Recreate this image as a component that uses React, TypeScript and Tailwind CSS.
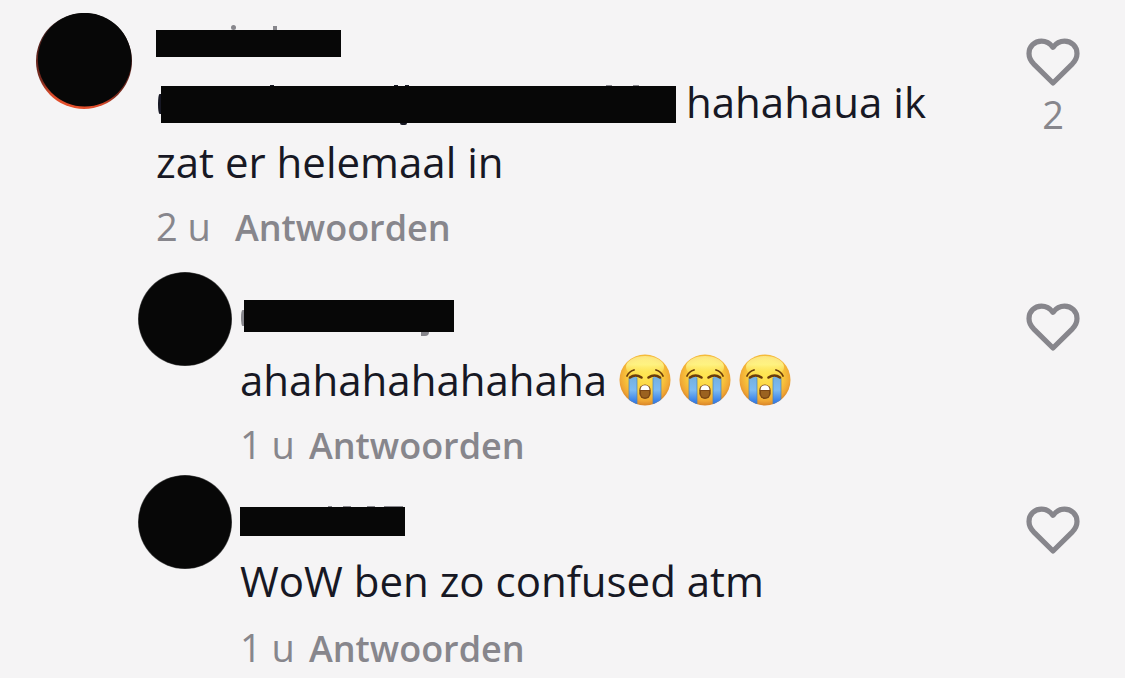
import { useId } from "react";
import type { ReactNode } from "react";

function Heart() {
  return (
    <svg viewBox="0 0 54 50" className="h-[50px] w-[54px]" fill="none" aria-hidden="true">
      <path
        d="M27 46 L7.6 26.800 C4.200 23.200 3 19.800 3 16.500 C3 9.400 8.500 4.200 15.500 4.200 C20.300 4.200 23.800 6.200 27 10.300 C30.200 6.200 33.700 4.200 38.500 4.200 C45.500 4.200 51 9.400 51 16.500 C51 19.800 49.800 23.200 46.400 26.800 Z"
        stroke="#87868c"
        strokeWidth="5.200"
        strokeLinejoin="round"
      />
    </svg>
  );
}

function CryingFace() {
  const id = useId();
  const face = `${id}-face`;
  const glow = `${id}-glow`;
  const tear = `${id}-tear`;
  const clip = `${id}-clip`;
  return (
    <svg viewBox="0 0 52 52" className="size-[52px]" role="img" aria-label="Loudly crying face">
      <defs>
        <radialGradient id={face} cx="0.5" cy="0.42" r="0.58">
          <stop offset="0" stopColor="#ffe552" />
          <stop offset="0.55" stopColor="#fbcf3e" />
          <stop offset="0.85" stopColor="#efa634" />
          <stop offset="1" stopColor="#d98428" />
        </radialGradient>
        <linearGradient id={glow} x1="0" y1="0" x2="0" y2="1">
          <stop offset="0" stopColor="#fffcae" stopOpacity="0.6" />
          <stop offset="0.4" stopColor="#fffa90" stopOpacity="0.8" />
          <stop offset="1" stopColor="#ffec50" stopOpacity="0" />
        </linearGradient>
        <linearGradient id={tear} x1="0" y1="0" x2="0" y2="1">
          <stop offset="0" stopColor="#74afe0" />
          <stop offset="0.45" stopColor="#7dbbf2" />
          <stop offset="0.8" stopColor="#3f85e8" />
          <stop offset="1" stopColor="#2f70d8" />
        </linearGradient>
        <clipPath id={clip}>
          <circle cx="26" cy="26" r="25.500" />
        </clipPath>
      </defs>
      <circle cx="26" cy="26" r="25.500" fill={`url(#${face})`} />
      <ellipse cx="26" cy="13" rx="19" ry="11" fill={`url(#${glow})`} />
      <g clipPath={`url(#${clip})`}>
        <rect x="10" y="23" width="8" height="29" fill={`url(#${tear})`} />
        <rect x="34" y="23" width="8" height="29" fill={`url(#${tear})`} />
        <path d="M10 24v28M18 24v28M34 24v28M42 24v28" stroke="#4b84b4" strokeWidth="0.700" />
      </g>
      <g fill="none" stroke="#6a3c0c" strokeLinecap="round">
        <path d="M8 22 Q10 17.500 15 16" strokeWidth="1.800" />
        <path d="M44 22 Q42 17.500 37 16" strokeWidth="1.800" />
        <path d="M11 23.500 Q16.500 19.500 22.500 23.500" strokeWidth="2.600" />
        <path d="M29.500 23.500 Q35.500 19.500 41 23.500" strokeWidth="2.600" />
      </g>
      <rect x="20.300" y="30.500" width="11.400" height="14.500" rx="5.700" fill="#7b4614" />
      <path d="M21.500 36 Q21.500 31.300 26 31.300 Q30.500 31.300 30.500 36Z" fill="#fff" />
      <path d="M22 37 H30 V39.500 Q30 43.500 26 43.500 Q22 43.500 22 39.500Z" fill="#9b6220" />
    </svg>
  );
}

function Avatar({ ring = false }: { ring?: boolean }) {
  const id = useId();
  return (
    <svg
      viewBox="0 0 96 96"
      className={ring ? "size-24 shrink-0" : "size-[94px] shrink-0"}
      aria-hidden="true"
    >
      <defs>
        <linearGradient id={id} x1="0.700" y1="0" x2="0.500" y2="1">
          <stop offset="0" stopColor="#222" />
          <stop offset="0.500" stopColor="#5a221c" />
          <stop offset="0.800" stopColor="#7a2a1e" />
          <stop offset="0.920" stopColor="#d84a2b" />
          <stop offset="1" stopColor="#e5502c" />
        </linearGradient>
      </defs>
      <circle cx="48" cy="48" r="48" fill={ring ? `url(#${id})` : "#555"} />
      {ring ? (
        <circle cx="48.700" cy="46.700" r="46.800" fill="#070707" />
      ) : (
        <circle cx="48" cy="48" r="47.400" fill="#070707" />
      )}
    </svg>
  );
}

function Like({ count }: { count?: number }) {
  return (
    <button type="button" aria-label="Vind ik leuk" className="flex w-[54px] shrink-0 flex-col items-center">
      <Heart />
      {count !== undefined && <span className="text-[38px] leading-[54px] text-[#87868c]">{count}</span>}
    </button>
  );
}

function Meta({ age, className }: { age: string; className: string }) {
  return (
    <div className={`flex items-baseline text-[38px] leading-[52px] text-[#87868c] ${className}`}>
      <span>{age}</span>
      <button type="button" className="text-[36px] font-semibold">
        Antwoorden
      </button>
    </div>
  );
}

function Redacted({ className, children }: { className: string; children?: ReactNode }) {
  return <span className={`relative block shrink-0 bg-[#070707] ${className}`}>{children}</span>;
}

export default function App() {
  return (
    <main className="min-h-screen bg-[#f5f4f5] pt-[13px] pr-[45px] font-['Open_Sans',sans-serif] text-[#171824]">
      <article className="flex items-start pl-9">
        <Avatar ring />
        <div className="ml-6 min-w-0 flex-1 pt-[17px]">
          <Redacted className="h-[27px] w-[185px]">
            <i className="absolute -top-[5px] left-[75px] size-[5px] rounded-full bg-[#87868c]" />
            <i className="absolute -top-1 left-[117px] h-1 w-1 bg-[#87868c]" />
          </Redacted>
          <p className="mt-[15px] text-[42px] leading-[60px]">
            <span className="flex items-center gap-2.5 pl-[5px]">
              <Redacted className="mt-1 h-[37px] w-[515px]">
                <i className="absolute top-2 -left-[3px] h-5 w-[3px] rounded-l-[100%] bg-[#171824]" />
                <i className="absolute -top-px left-[109px] h-px w-1 bg-[#171824]" />
                <i className="absolute -top-px left-[233px] h-px w-1 bg-[#171824]" />
                <i className="absolute -top-px left-[244px] h-px w-1 bg-[#171824]" />
                <i className="absolute top-full left-[239px] h-0.5 w-[7px] rounded-b-full bg-[#171824]" />
                <i className="absolute -top-px left-[445px] h-px w-[6px] bg-[#87868c]" />
                <i className="absolute -top-px left-[472px] h-px w-[6px] bg-[#87868c]" />
              </Redacted>
              hahahaua ik
            </span>
            zat er helemaal in
          </p>
          <Meta age="2 u" className="mt-2 gap-6" />
        </div>
        <div className="pt-6">
          <Like count={2} />
        </div>
      </article>

      <article className="mt-[18px] flex items-start pl-[138px]">
        <Avatar />
        <div className="ml-2 min-w-0 flex-1 pt-7">
          <Redacted className="ml-1 h-8 w-[210px]">
            <i className="absolute top-2.5 -left-[3px] h-4 w-[3px] rounded-l-[100%] bg-[#87868c]" />
            <i className="absolute top-full left-[177px] h-1 w-2 rounded-br-full bg-[#87868c]" />
          </Redacted>
          <p className="mt-[18px] flex items-center gap-3 text-[42px] leading-[60px]">
            ahahahahahahaha
            <span className="flex gap-2">
              <CryingFace />
              <CryingFace />
              <CryingFace />
            </span>
          </p>
          <Meta age="1 u" className="mt-2 gap-3.5" />
        </div>
        <div className="pt-[30px]">
          <Like />
        </div>
      </article>

      <article className="mt-[3px] flex items-start pl-[138px]">
        <Avatar />
        <div className="ml-2 min-w-0 flex-1 pt-8">
          <Redacted className="h-[29px] w-[165px]">
            <i className="absolute -top-px left-[88px] h-px w-1 bg-[#87868c]" />
            <i className="absolute -top-px left-[103px] h-px w-2 bg-[#87868c]" />
            <i className="absolute -top-px left-[127px] h-px w-2 bg-[#87868c]" />
            <i className="absolute -top-px left-[144px] h-px w-[19px] bg-[#87868c]" />
          </Redacted>
          <p className="mt-[15px] text-[42px] leading-[60px]">WoW ben zo confused atm</p>
          <Meta age="1 u" className="mt-2.5 gap-3.5" />
        </div>
        <div className="pt-[30px]">
          <Like />
        </div>
      </article>
    </main>
  );
}
